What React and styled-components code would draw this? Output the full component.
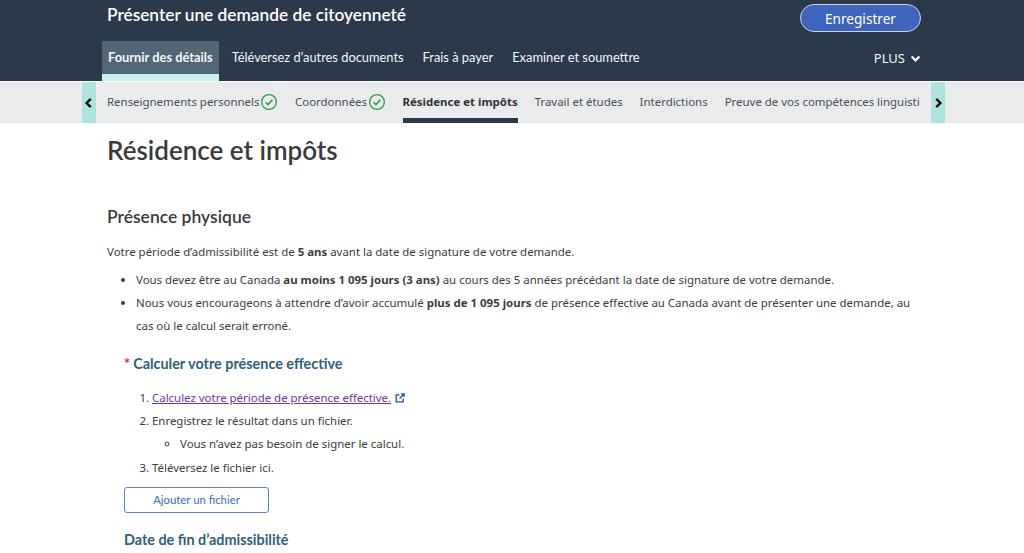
import React from "react";
import styled, { createGlobalStyle } from "styled-components";

const Global = createGlobalStyle`
  html, body { margin: 0; padding: 0; background: #fff; height: 553px; overflow: hidden; }
  body { font-family: "Noto Sans", sans-serif; color: #3c3c3c; }
`;
const Header = styled.header`
  background: #2b394b; height: 81px; padding: 0 103px 0 102px; box-sizing: border-box;
  display: flex; flex-direction: column;
`;
const TopRow = styled.div`
  height: 41px; display: flex; justify-content: space-between; align-items: flex-start; padding-left: 5px;
`;
const Title = styled.h1`
  margin: 3px 0 0; font: 600 17.3px/24px Lato, sans-serif; color: #fff;
`;
const SaveButton = styled.button`
  margin-top: 4px; width: 121px; height: 28px; border-radius: 14px; border: 1px solid #c9d3e6;
  background: #3f64bd; color: #fff; font: 400 13.6px "Noto Sans", sans-serif; padding: 0;
`;
const NavRow = styled.nav`
  flex: 1; display: flex; align-items: stretch; justify-content: space-between;
`;
const Tabs = styled.div`display: flex; gap: 7px;`;
const Tab = styled.a`
  box-sizing: border-box; padding: 7px 6px 0; font: ${p => (p.$active ? 700 : 400)} 12.85px/18px Lato, sans-serif; color: #f3f5f7;
  background: ${p => (p.$active ? "#526676" : "transparent")};
  border-bottom: 7px solid ${p => (p.$active ? "#c6f0ec" : "transparent")};
`;
const More = styled.div`
  display: flex; align-items: flex-start; gap: 5px; padding-top: 8px; color: #f3f5f7; font: 400 13px/18px "Noto Sans", sans-serif;
`;
const SubBand = styled.div`
  margin-top: 1px; height: 41px; background: #e9ebed; padding: 0 79px 0 82px; display: flex; align-items: stretch;
`;
const Arrow = styled.div`
  width: 14px; flex: none; background: #aee3de; display: flex; align-items: center; justify-content: center;
`;
const SubItems = styled.div`
  flex: 1; min-width: 0; overflow: hidden; margin: 0 11px; display: flex; gap: 17px; white-space: nowrap;
`;
const SubItem = styled.a`
  flex: none; display: flex; align-items: center; gap: 1px; height: 41px; box-sizing: border-box;
  font: ${p => (p.$active ? 700 : 400)} 11.45px "Noto Sans", sans-serif; color: ${p => (p.$active ? "#333" : "#4a4f55")};
  border-bottom: 5px solid ${p => (p.$active ? "#2b394b" : "transparent")}; padding-top: 3px;
`;
const Main = styled.main`padding: 0 103px 0 107px;`;
const H1 = styled.h2`margin: 11px 0 0; font: 600 26px/32px Lato, sans-serif; color: #3a3a3a;`;
const H2 = styled.h3`margin: 40px 0 0; font: 600 17.5px/22px Lato, sans-serif; color: #3a3a3a;`;
const P = styled.p`margin: 14px 0 0; font: 400 11.45px/20px "Noto Sans", sans-serif;`;
const Bullets = styled.ul`
  margin: 6px 0 0; padding: 0 0 0 29px; font: 400 11.45px/23px "Noto Sans", sans-serif;
`;
const Section = styled.section`padding-left: 17px;`;
const H3 = styled.h4`margin: ${p => p.$mt}px 0 0; font: 700 14.4px/20px Lato, sans-serif; color: #2f6178;`;
const Star = styled.span`color: #d3302f; margin-right: 3px; font-weight: 700;`;
const Steps = styled.ol`
  margin: 12px 0 0; padding: 0 0 0 28px; font: 400 11.45px/23.2px "Noto Sans", sans-serif;
  ul { margin: 0; padding-left: 28px; list-style: circle; }
`;
const Link = styled.a`color: #6936b5; text-decoration: underline;`;
const FileButton = styled.button`
  display: block; margin-top: 8px; width: 145px; height: 26px; background: #fff; border: 1px solid #5f80d2; border-radius: 3px;
  color: #4468c4; font: 400 11.35px Lato, sans-serif; padding: 0;
`;

const Check = () => (
  <svg width="17.5" height="18" viewBox="0 0 17.5 18" fill="none" stroke="#2e9e45" strokeWidth="1.3" aria-hidden="true">
    <circle cx="9" cy="9" r="7.4" />
    <path d="M5.6 9.2 8 11.6l4.4-4.8" strokeWidth="1.5" />
  </svg>
);
const Chevron = ({ dir = "left", color = "#111", size = 12 }) => {
  const d = { left: "M6.5 1.5 3 5l3.5 3.5", right: "M3.5 1.5 7 5 3.5 8.5", down: "M1.5 3.2 5 6.7l3.5-3.5" }[dir];
  return (
    <svg width={size} height={size} viewBox="0 0 10 10" fill="none" stroke={color} strokeWidth="2" aria-hidden="true">
      <path d={d} />
    </svg>
  );
};
const Ext = styled.svg`margin-left: 4px; vertical-align: -1px;`;
const External = () => (
  <Ext width="10" height="10" viewBox="0 0 11 11" fill="none" stroke="#2a4fa8" strokeWidth="1.5" aria-hidden="true">
    <path d="M5 2H1.3v7.7H9V6M6.5 1H10v3.5M10 1 5 6" />
  </Ext>
);
const ChevronWrap = styled.span`margin-top: 1px;`;

export default function App() {
  return (
    <>
      <Global />
      <Header>
        <TopRow>
          <Title>Présenter une demande de citoyenneté</Title>
          <SaveButton>Enregistrer</SaveButton>
        </TopRow>
        <NavRow>
          <Tabs>
            <Tab $active>Fournir des détails</Tab>
            <Tab>Téléversez d’autres documents</Tab>
            <Tab>Frais à payer</Tab>
            <Tab>Examiner et soumettre</Tab>
          </Tabs>
          <More>PLUS <ChevronWrap><Chevron dir="down" color="#fff" size={11} /></ChevronWrap></More>
        </NavRow>
      </Header>
      <SubBand>
        <Arrow><Chevron dir="left" /></Arrow>
        <SubItems>
          <SubItem>Renseignements personnels <Check /></SubItem>
          <SubItem>Coordonnées <Check /></SubItem>
          <SubItem $active>Résidence et impôts</SubItem>
          <SubItem>Travail et études</SubItem>
          <SubItem>Interdictions</SubItem>
          <SubItem>Preuve de vos compétences linguistiques</SubItem>
        </SubItems>
        <Arrow><Chevron dir="right" /></Arrow>
      </SubBand>
      <Main>
        <H1>Résidence et impôts</H1>
        <H2>Présence physique</H2>
        <P>Votre période d’admissibilité est de <b>5 ans</b> avant la date de signature de votre demande.</P>
        <Bullets>
          <li>Vous devez être au Canada <b>au moins 1 095 jours (3 ans)</b> au cours des 5 années précédant la date de signature de votre demande.</li>
          <li>Nous vous encourageons à attendre d’avoir accumulé <b>plus de 1 095 jours</b> de présence effective au Canada avant de présenter une demande, au cas où le calcul serait erroné.</li>
        </Bullets>
        <Section>
          <H3 $mt={17}><Star>*</Star>Calculer votre présence effective</H3>
          <Steps>
            <li><Link>Calculez votre période de présence effective.</Link><External /></li>
            <li>Enregistrez le résultat dans un fichier.
              <ul><li>Vous n’avez pas besoin de signer le calcul.</li></ul>
            </li>
            <li>Téléversez le fichier ici.</li>
          </Steps>
          <FileButton>Ajouter un fichier</FileButton>
          <H3 $mt={17}>Date de fin d’admissibilité</H3>
        </Section>
      </Main>
    </>
  );
}
